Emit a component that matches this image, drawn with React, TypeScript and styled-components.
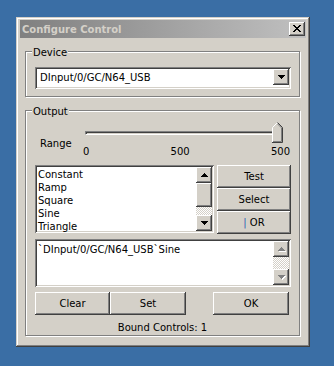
import styled, { createGlobalStyle } from "styled-components";

const GlobalStyle = createGlobalStyle`
  html, body {
    margin: 0;
    padding: 0;
  }
  body {
    background: #3a6ea5;
    font-family: "DejaVu Sans", Tahoma, sans-serif;
    font-size: 10px;
    color: #000;
  }
`;

const face = "#d4d0c8";

const raised = `
  background: ${face};
  box-shadow: inset -1px -1px #404040, inset 1px 1px #fff,
    inset -2px -2px #808080, inset 2px 2px ${face};
`;

const sunken = `
  background: #fff;
  box-shadow: inset 1px 1px #808080, inset -1px -1px #fff,
    inset 2px 2px #404040, inset -2px -2px ${face};
`;

const items = ["Constant", "Ramp", "Square", "Sine", "Triangle"];

const CloseGlyph = () => {
  const rows = ["11000011", "01100110", "00111100", "00011000", "00111100", "01100110", "11000011"];
  return (
    <svg width="8" height="7" viewBox="0 0 8 7" shapeRendering="crispEdges">
      {rows.map((r, y) =>
        r.split("").map((c, x) => (c === "1" ? <rect key={`${x}-${y}`} x={x} y={y} width="1" height="1" fill="#000" /> : null))
      )}
    </svg>
  );
};

const Arrow = ({ up, disabled }: { up?: boolean; disabled?: boolean }) => {
  const rects = [0, 1, 2, 3].map((i) => ({ x: i, y: up ? 3 - i : i, w: 7 - i * 2 }));
  return (
    <svg width="8" height="5" viewBox="0 0 8 5" shapeRendering="crispEdges">
      {disabled &&
        rects.map((r) => <rect key={"s" + r.y} x={r.x + 1} y={r.y + 1} width={r.w} height="1" fill="#fff" />)}
      {rects.map((r) => (
        <rect key={r.y} x={r.x} y={r.y} width={r.w} height="1" fill={disabled ? "#808080" : "#000"} />
      ))}
    </svg>
  );
};

const Thumb = () => (
  <svg width="11" height="21" viewBox="0 0 11 21">
    <polygon points="5,0 10,5 10,20 0,20 0,5" fill={face} />
    <path d="M0.5 20V5.5L5.5 0.5" stroke="#fff" fill="none" />
    <path d="M5.5 0.5L10.5 5.5V20.5H0" stroke="#404040" fill="none" />
    <path d="M5.5 1.9L9.5 5.9V19.5H1" stroke="#808080" fill="none" />
  </svg>
);

export default function App() {
  return (
    <>
      <GlobalStyle />
      <Desktop>
        <Window>
          <TitleBar>
            <Title>Configure Control</Title>
            <CloseButton>
              <CloseGlyph />
            </CloseButton>
          </TitleBar>

          <Group>
            <Legend>Device</Legend>
            <GroupBody $pad="9px 0 7px 9px">
              <Combo>
                <ComboText>DInput/0/GC/N64_USB</ComboText>
                <ScrollButton>
                  <Arrow />
                </ScrollButton>
              </Combo>
            </GroupBody>
          </Group>

          <Group>
            <Legend>Output</Legend>
            <GroupBody $pad="0 0 1px 9px">
              <SliderRow>
                <RangeLabel>Range</RangeLabel>
                <Slider>
                  <TrackArea>
                    <Track />
                    <ThumbHolder>
                      <Thumb />
                    </ThumbHolder>
                  </TrackArea>
                  <Ticks>
                    <span>0</span>
                    <span>500</span>
                    <span>500</span>
                  </Ticks>
                </Slider>
              </SliderRow>

              <ListRow>
                <ListBox>
                  <Items>
                    {items.map((it) => (
                      <Item key={it}>{it}</Item>
                    ))}
                  </Items>
                  <ScrollBar>
                    <ScrollButton>
                      <Arrow up />
                    </ScrollButton>
                    <ScrollThumb />
                    <ScrollTrack />
                    <ScrollButton>
                      <Arrow />
                    </ScrollButton>
                  </ScrollBar>
                </ListBox>
                <ButtonColumn>
                  <Button>Test</Button>
                  <Button>Select</Button>
                  <Button>
                    <Pipe>|</Pipe>&nbsp;OR
                  </Button>
                </ButtonColumn>
              </ListRow>

              <Expression>
                <ExpressionText>`DInput/0/GC/N64_USB`Sine</ExpressionText>
                <ScrollBar>
                  <ScrollButton>
                    <Arrow up disabled />
                  </ScrollButton>
                  <ScrollTrack />
                  <ScrollButton>
                    <Arrow disabled />
                  </ScrollButton>
                </ScrollBar>
              </Expression>

              <ButtonRow>
                <Button $w={75}>Clear</Button>
                <Button $w={76}>Set</Button>
                <Button $w={76} $ml={27}>
                  OK
                </Button>
              </ButtonRow>

              <Status>Bound Controls: 1</Status>
            </GroupBody>
          </Group>
        </Window>
      </Desktop>
    </>
  );
}

const Desktop = styled.div`
  width: 334px;
  height: 366px;
  box-sizing: border-box;
  padding: 17px 0 0 16px;
  background: #3a6ea5;
  overflow: hidden;
`;

const Window = styled.div`
  width: 294px;
  height: 330px;
  box-sizing: border-box;
  padding: 3px 4px;
  display: flex;
  flex-direction: column;
  background: ${face};
  box-shadow: inset -1px -1px #404040, inset 1px 1px ${face},
    inset -2px -2px #808080, inset 2px 2px #fff;
`;

const TitleBar = styled.div`
  height: 18px;
  display: flex;
  align-items: center;
  justify-content: space-between;
  padding: 0 1px 0 2px;
  background: linear-gradient(to right, #808080, #c0c0c0);
`;

const Title = styled.span`
  font-weight: bold;
  color: ${face};
  line-height: 12px;
  padding-top: 1px;
`;

const CloseButton = styled.div`
  width: 16px;
  height: 14px;
  ${raised}
  display: flex;
  align-items: center;
  justify-content: center;
  & > svg {
    margin: 0 0 1px 0;
  }
`;

const Group = styled.fieldset`
  margin: 7px 0 0 5px;
  padding: 0;
  width: 275px;
  min-width: 0;
  box-sizing: border-box;
  border: 1px solid #808080;
  box-shadow: inset 1px 1px #fff, 1px 1px #fff;
`;

const Legend = styled.legend`
  margin-left: 6px;
  padding: 3px 1px 0;
  line-height: 10px;
  background: ${face};
`;

const GroupBody = styled.div<{ $pad: string }>`
  padding: ${(p) => p.$pad};
  display: flex;
  flex-direction: column;
`;

const Combo = styled.div`
  width: 256px;
  height: 22px;
  box-sizing: border-box;
  padding: 2px;
  display: flex;
  ${sunken}
`;

const ComboText = styled.div`
  flex: 1;
  padding-left: 3px;
  line-height: 18px;
`;

const SliderRow = styled.div`
  height: 48px;
  display: flex;
`;

const RangeLabel = styled.div`
  width: 45px;
  padding: 20px 0 0 5px;
  line-height: 13px;
`;

const Slider = styled.div`
  width: 205px;
  display: flex;
  flex-direction: column;
`;

const TrackArea = styled.div`
  position: relative;
  height: 21px;
  margin-top: 5px;
`;

const Track = styled.div`
  margin-top: 9px;
  width: 198px;
  height: 4px;
  box-sizing: border-box;
  border-top: 1px solid #808080;
  border-left: 1px solid #808080;
  border-bottom: 1px solid #fff;
  border-right: 1px solid #fff;
  background: ${face};
  box-shadow: inset 1px 1px #404040;
`;

const ThumbHolder = styled.div`
  position: absolute;
  left: 187px;
  top: 0;
  line-height: 0;
`;

const Ticks = styled.div`
  margin: 2px 0 0 -2px;
  display: flex;
  justify-content: space-between;
  line-height: 13px;
`;

const ListRow = styled.div`
  display: flex;
  gap: 3px;
`;

const ListBox = styled.div`
  width: 179px;
  height: 68px;
  box-sizing: border-box;
  padding: 2px;
  display: flex;
  ${sunken}
`;

const Items = styled.div`
  flex: 1;
  padding: 1px 0 0 1px;
`;

const Item = styled.div`
  line-height: 13px;
`;

const ScrollBar = styled.div`
  width: 16px;
  display: flex;
  flex-direction: column;
`;

const ScrollButton = styled.div`
  width: 16px;
  height: 16px;
  flex: none;
  ${raised}
  display: flex;
  align-items: center;
  justify-content: center;
  & > svg {
    margin-left: 1px;
  }
`;

const ScrollThumb = styled.div`
  height: 24px;
  flex: none;
  ${raised}
`;

const ScrollTrack = styled.div`
  flex: 1;
  background: repeating-conic-gradient(${face} 0 25%, #fff 0 50%) 0 0 / 2px 2px;
`;

const ButtonColumn = styled.div`
  display: flex;
  flex-direction: column;
`;

const Button = styled.div<{ $w?: number; $ml?: number }>`
  width: ${(p) => p.$w ?? 74}px;
  height: 23px;
  margin-left: ${(p) => p.$ml ?? 0}px;
  box-sizing: border-box;
  ${raised}
  display: flex;
  align-items: center;
  justify-content: center;
  padding-bottom: 1px;
`;

const Pipe = styled.span`
  color: #2a62b0;
`;

const Expression = styled.div`
  margin-top: 5px;
  width: 256px;
  height: 48px;
  box-sizing: border-box;
  padding: 2px;
  display: flex;
  ${sunken}
`;

const ExpressionText = styled.div`
  flex: 1;
  padding: 2px 0 0 1px;
  line-height: 13px;
`;

const ButtonRow = styled.div`
  margin-top: 5px;
  display: flex;
`;

const Status = styled.div`
  margin-top: 6px;
  line-height: 13px;
  text-align: center;
  padding-right: 9px;
`;
